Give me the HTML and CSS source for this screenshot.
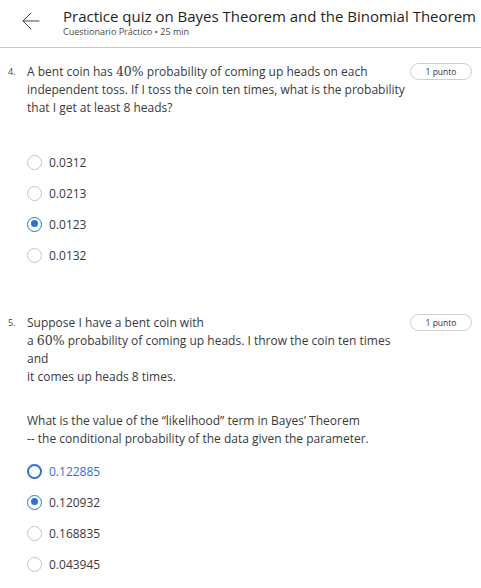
FILE: index.html
```html
<!DOCTYPE html>
<html lang="en">
<head>
<meta charset="utf-8">
<title>Practice quiz</title>
<link rel="stylesheet" href="styles.css">
</head>
<body>
<header class="header">
  <button class="back" aria-label="Back">
    <svg width="18" height="18" viewBox="0 0 18 18" fill="none" stroke="#444" stroke-width="1" stroke-linecap="round" stroke-linejoin="round"><path d="M17 9H1M9 1L1 9l8 8"/></svg>
  </button>
  <div class="titles">
    <h1 class="title">Practice quiz on Bayes Theorem and the Binomial Theorem</h1>
    <div class="subtitle">Cuestionario Práctico • 25 min</div>
  </div>
</header>
<main class="quiz">
  <section class="question q4">
    <div class="num">4.</div>
    <div class="body">
      <p class="prompt">A bent coin has <span class="math">40%</span> probability of coming up heads on each independent toss. If I toss the coin ten times, what is the probability that I get at least 8 heads?</p>
      <ul class="options">
        <li class="option"><span class="radio"></span><span class="label">0.0312</span></li>
        <li class="option"><span class="radio"></span><span class="label">0.0213</span></li>
        <li class="option"><span class="radio checked"></span><span class="label">0.0123</span></li>
        <li class="option"><span class="radio"></span><span class="label">0.0132</span></li>
      </ul>
    </div>
    <div class="pill">1 punto</div>
  </section>
  <section class="question q5">
    <div class="num">5.</div>
    <div class="body">
      <p class="prompt">Suppose I have a bent coin with<br>a <span class="math">60%</span> probability of coming up heads. I throw the coin ten times and<br>it comes up heads 8 times.</p>
      <p class="prompt second">What is the value of the “likelihood” term in Bayes’ Theorem<br>-- the conditional probability of the data given the parameter.</p>
      <ul class="options">
        <li class="option hover"><span class="radio focus"></span><span class="label">0.122885</span></li>
        <li class="option"><span class="radio checked"></span><span class="label">0.120932</span></li>
        <li class="option"><span class="radio"></span><span class="label">0.168835</span></li>
        <li class="option"><span class="radio"></span><span class="label">0.043945</span></li>
      </ul>
    </div>
    <div class="pill">1 punto</div>
  </section>
</main>
</body>
</html>
```
FILE: styles.css
```css
* { box-sizing: border-box; }
html, body { margin: 0; padding: 0; background: #fff; }
body {
  font-family: "Open Sans", "Noto Sans", sans-serif;
  color: #373a3c;
  width: 481px;
  overflow: hidden;
}
.header {
  display: flex;
  align-items: flex-start;
  height: 48px;
  border-bottom: 1px solid #c8c8c8;
  padding: 5px 0 0 22px;
}
.back {
  border: 0;
  background: none;
  padding: 0;
  margin: 7px 0 0 0;
  width: 18px;
  height: 18px;
  display: flex;
}
.titles { margin-left: 23px; }
.title {
  margin: 0;
  font-size: 15px;
  font-weight: 400;
  line-height: 22px;
  color: #1f1f1f;
  white-space: nowrap;
}
.subtitle {
  font-size: 9px;
  line-height: 10px;
  color: #4a4a4a;
}
.quiz { padding: 15px 0 0 0; }
.question {
  display: flex;
  align-items: flex-start;
}
.num {
  width: 27px;
  padding-left: 8px;
  font-size: 9px;
  line-height: 18px;
  color: #444;
}
.body { width: 381px; }
.prompt {
  margin: 0;
  font-size: 12px;
  line-height: 18px;
  color: #373a3c;
}
.prompt.second { margin-top: 26px; }
.math {
  font-family: "DejaVu Serif", "Liberation Serif", serif;
  font-size: 12.5px;
  line-height: 1;
}
.options {
  list-style: none;
  margin: 37px 0 0 0;
  padding: 0;
  display: flex;
  flex-direction: column;
  gap: 15px;
}
.q5 .options { margin-top: 15px; }
.option {
  display: flex;
  align-items: center;
  height: 16px;
  font-size: 12px;
  color: #3a3a3a;
}
.radio {
  width: 15px;
  height: 15px;
  border-radius: 50%;
  border: 1.5px solid #c4c4c4;
  margin-right: 7px;
  position: relative;
  flex: none;
}
.radio.checked { border-color: #2a73d6; }
.radio.checked::after {
  content: "";
  position: absolute;
  left: 2.5px; top: 2.5px;
  width: 7px; height: 7px;
  border-radius: 50%;
  background: #2a73d6;
}
.radio.focus { border-color: #2a73d6; border-width: 2px; }
.option.hover .label { color: #2a73d6; }
.pill {
  margin-left: 2px;
  width: 62px;
  height: 17px;
  border: 1px solid #cfcfcf;
  border-radius: 9px;
  font-size: 8.5px;
  line-height: 15px;
  text-align: center;
  color: #333;
}
.q5 { margin-top: 51px; }
```
